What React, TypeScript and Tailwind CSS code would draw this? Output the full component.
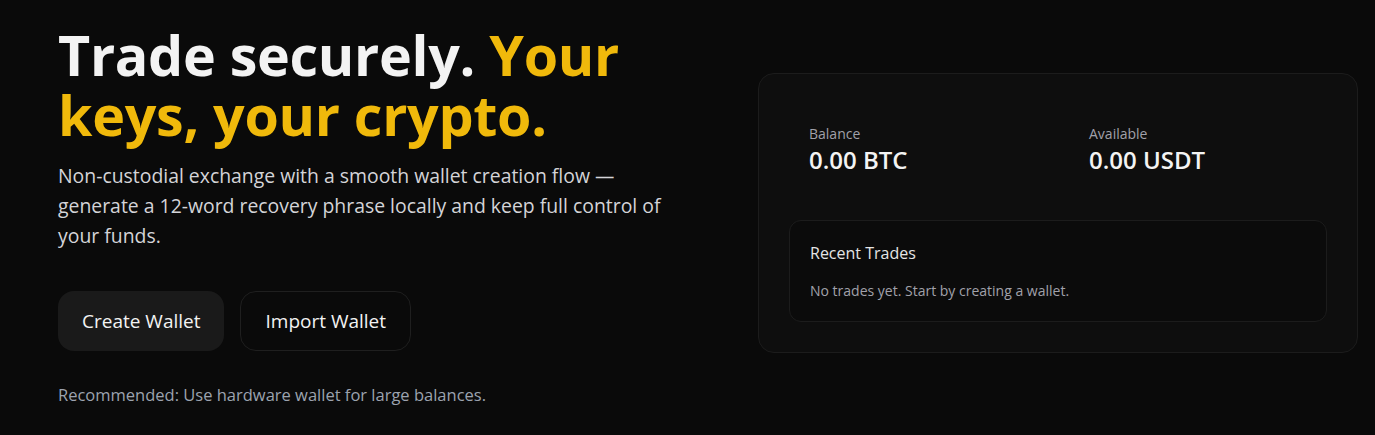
import * as React from "react"

type Stat = {
  label: string
  value: string
}

const stats: Stat[] = [
  { label: "Balance", value: "0.00 BTC" },
  { label: "Available", value: "0.00 USDT" },
]

export default function App(): React.JSX.Element {
  return (
    <div className="min-h-screen w-full bg-[#0a0a0a] text-white font-['Open_Sans',sans-serif]">
      <div className="grid grid-cols-[620px_600px] gap-[80px] items-start pl-[58px] pr-[17px] pt-[25px]">
        {/* hero copy */}
        <div className="flex flex-col">
          <h1 className="w-[600px] text-[55.6px] leading-[60px] font-bold tracking-[-0.3px] text-[#f3f3f3]">
            Trade securely. <span className="text-[#f0b90b]">Your keys, your crypto.</span>
          </h1>
          <p className="mt-4 text-[19.4px] leading-[30px] text-[#d4d4d8]">
            Non-custodial exchange with a smooth wallet creation flow — generate a 12-word recovery phrase locally and keep full control of your funds.
          </p>
          <div className="mt-10 flex flex-row gap-4">
            <button type="button" className="h-[60px] px-6 rounded-2xl bg-[#1a1a1a] text-[19px] text-[#f3f3f3]">
              Create Wallet
            </button>
            <button type="button" className="h-[60px] px-6 rounded-2xl border border-[#1f1f1f] bg-[#0a0a0a] text-[19px] text-[#f3f3f3]">
              Import Wallet
            </button>
          </div>
          <p className="mt-8 text-[16.5px] leading-6 text-[#9ca3af]">
            Recommended: Use hardware wallet for large balances.
          </p>
        </div>

        {/* wallet card */}
        <div className="mt-12 rounded-2xl border border-[#1c1c1c] bg-[#0e0e0e] p-[30px]">
          <div className="grid grid-cols-2 gap-[22px]">
            {stats.map((s, i) => (
              <div key={`stat-${i}`} className="p-5">
                <div className="text-sm leading-5 text-[#a1a1aa]">{s.label}</div>
                <div className="text-2xl leading-8 font-semibold text-[#f3f3f3]">{s.value}</div>
              </div>
            ))}
          </div>
          <div className="mt-6 rounded-xl border border-[#1c1c1c] bg-[#0b0b0b] p-5">
            <div className="text-base leading-6 text-[#e5e5e5]">Recent Trades</div>
            <div className="mt-4 text-sm leading-5 text-[#a1a1aa]">No trades yet. Start by creating a wallet.</div>
          </div>
        </div>
      </div>
    </div>
  )
}
